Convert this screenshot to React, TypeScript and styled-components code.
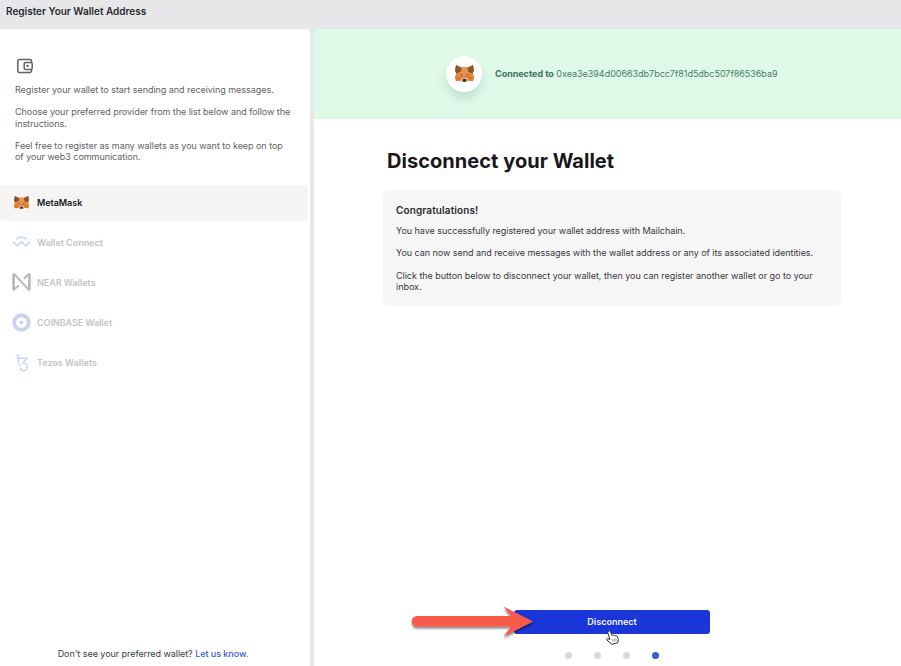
import React from 'react';
import styled, { createGlobalStyle } from 'styled-components';

const GlobalStyle = createGlobalStyle`
  * { box-sizing: border-box; }
  body { margin: 0; background: #e7e7e9; overflow: hidden; font-family: Inter, sans-serif; }
  h1, h2, p { margin: 0; }
  svg { display: block; flex: none; }
`;

const Page = styled.div`
  height: 100vh;
  display: flex;
  flex-direction: column;
  position: relative;
  overflow: hidden;
`;

const TopBar = styled.header`
  height: 29px;
  flex: none;
  padding: 5px 6px 0;
  font-size: 10px;
  line-height: 13px;
  font-weight: 600;
  color: #2a2a2d;
`;

const Body = styled.div`
  flex: 1;
  display: flex;
  gap: 4px;
  min-height: 0;
`;

const Sidebar = styled.aside`
  width: 310px;
  flex: none;
  background: #fff;
  border-radius: 0 4px 0 0;
  display: flex;
  flex-direction: column;
  padding: 28px 2px 0 0;
`;

const Intro = styled.div`
  padding: 0 0 0 15px;
  height: 127.5px;
  display: flex;
  flex-direction: column;
  gap: 11.2px;
  color: #626265;
  font-size: 9px;
  line-height: 11.1px;
  white-space: nowrap;

  svg { margin: 0 0 -2px 1px; }
`;

const Line = styled.span<{ $ls?: number }>`
  display: block;
  letter-spacing: ${(p) => p.$ls ?? -0.042}px;
`;

const WalletList = styled.nav`
  display: flex;
  flex-direction: column;
  gap: 4.2px;
`;

const WalletItem = styled.div<{ $active?: boolean }>`
  height: 36px;
  padding: 0 0 1px 12px;
  display: flex;
  align-items: center;
  gap: 6px;
  border-radius: 4px;
  background: ${(p) => (p.$active ? '#f5f5f5' : 'transparent')};
  color: ${(p) => (p.$active ? '#161618' : '#c4c4c5')};
  font-size: 9px;
  font-weight: 600;
`;

const IconSlot = styled.span`
  width: 19px;
  display: flex;
  justify-content: center;
`;

const Footer = styled.p`
  margin-top: auto;
  padding: 0 2px 6px 0;
  text-align: center;
  font-size: 9px;
  line-height: 13px;
  letter-spacing: -0.05px;
  color: #3b3b3e;
`;

const FooterLink = styled.a`
  color: #4258dc;
  font-weight: 500;
`;

const Main = styled.main`
  flex: 1;
  min-width: 0;
  background: #fff;
  border-radius: 4px 0 0 0;
  overflow: hidden;
  display: flex;
  flex-direction: column;
`;

const Banner = styled.div`
  height: 90px;
  flex: none;
  background: #dff9e9;
  display: flex;
  align-items: center;
  padding: 0 0 1px 132px;
  gap: 13px;
  color: #4a7b66;
  font-size: 9px;
  white-space: nowrap;

  b { font-weight: 700; color: #3e705b; }
`;

const Avatar = styled.div`
  width: 36px;
  height: 36px;
  border-radius: 50%;
  background: #fff;
  display: flex;
  align-items: center;
  justify-content: center;
  box-shadow: 0 7px 9px rgba(60, 120, 90, 0.17);
`;

const Title = styled.h1`
  margin: 28px 0 0 73px;
  font-size: 20px;
  line-height: 28px;
  font-weight: 700;
  letter-spacing: 0.04px;
  color: #18181b;
  white-space: nowrap;
`;

const Card = styled.section`
  margin: 15px 0 0 69px;
  width: 458px;
  height: 116px;
  background: #f6f6f6;
  border-radius: 4px;
  padding: 14px 13px 0;
  display: flex;
  flex-direction: column;
  gap: 11.2px;
  font-size: 9px;
  line-height: 11.1px;
  color: #38383b;
  white-space: nowrap;
`;

const CardTitle = styled.h2`
  font-size: 10px;
  line-height: 13px;
  font-weight: 600;
  letter-spacing: 0.12px;
  color: #2b2b2e;
  margin-bottom: -3.2px;
`;

const Actions = styled.div`
  margin: auto 191px 0 200px;
  display: flex;
  flex-direction: column;
  align-items: center;
`;

const Button = styled.button`
  width: 100%;
  height: 24px;
  border: 0;
  border-radius: 3px;
  padding: 0;
  background: #1a36d8;
  color: #f4f5ff;
  font: 600 9px/24px Inter, sans-serif;
`;

const Steps = styled.div`
  display: flex;
  gap: 22px;
  padding: 18px 0 7px;
`;

const Dot = styled.i<{ $on?: boolean }>`
  width: 7px;
  height: 7px;
  border-radius: 50%;
  background: ${(p) => (p.$on ? '#4057d8' : '#d9d9dc')};
`;

const Pointer = styled.svg`
  position: absolute;
  left: 605px;
  top: 630px;
`;

const Arrow = styled.svg`
  position: absolute;
  left: 405px;
  top: 600px;
`;

const Fox = ({ w, h }: { w: number; h: number }) => (
  <svg width={w} height={h} viewBox="0 0 36 34" preserveAspectRatio="none">
    <path d="M2 0 13 4.500H23L34 0 36 11 34 17 36 24 34 32 25 31 21 34H15L11 31 2 32 0 24 2 17 0 11Z" fill="#e08a43" />
    <path d="M2 0 12 6 13 12 3 17 0 11ZM34 0 24 6 23 12 33 17 36 11Z" fill="#8a5530" />
    <path d="M13 4.500H23L25 15 18 22 11 15Z" fill="#e6944e" />
    <path d="M0 24 11 23 11 31 2 32ZM36 24 25 23 25 31 34 32Z" fill="#e2792d" />
    <path d="M9 20 14 19 14 21.500ZM27 20 22 19 22 21.500Z" fill="#8d5a38" />
    <path d="M12 27 15 26H21L24 27 24 31 21 34H15L12 31Z" fill="#d8b79c" />
    <path d="M15.500 28H20.500L21.500 31.500 20 33.500H16L14.500 31.500Z" fill="#33251f" />
  </svg>
);

const WalletOutline = () => (
  <svg width="18" height="18" viewBox="0 0 18 18" fill="none" stroke="#626264" strokeWidth="1.5">
    <path d="M15.500 5.300V3.900A1.500 1.500 0 0 0 14 2.400H3.300A1.500 1.500 0 0 0 1.800 3.900V14A1.500 1.500 0 0 0 3.300 15.500H14A1.500 1.500 0 0 0 15.500 14V12.400" />
    <rect x="8.200" y="5.500" width="8" height="6.900" rx="1.300" />
    <circle cx="11.600" cy="8.900" r="1.200" fill="#626264" stroke="none" />
  </svg>
);

const WalletConnectIcon = () => (
  <svg width="19" height="12" viewBox="0 0 19 12" fill="none" stroke="#cfdff8" strokeWidth="2" strokeLinejoin="round">
    <path d="M4.200 3.400C7.200.500 11.800.500 14.800 3.400" />
    <path d="M1 5.800 5.300 9.900 9.500 5.800 13.700 9.900 18 5.800" />
  </svg>
);

const NearIcon = () => (
  <svg width="19" height="20" viewBox="0 0 19 20" fill="none" stroke="#b8b8b8" strokeLinejoin="round" strokeLinecap="round">
    <path d="M6.200 14 1.900 17.600Q1.400 18 1.400 17V2.800Q1.400 1.400 2.600 2.400L16.300 17.400Q17.600 18.500 17.600 17V3Q17.600 1.400 16.400 2.400L12.400 6.300" strokeWidth="2" />
    <path d="M1.800 3.500V16.500M17.200 3.500V16.500" strokeWidth="2.200" />
  </svg>
);

const CoinbaseIcon = () => (
  <svg width="19" height="19" viewBox="0 0 19 19">
    <circle cx="9.500" cy="9.500" r="7.300" fill="#fff" stroke="#c9d1f4" strokeWidth="3.700" />
    <circle cx="9.500" cy="9.500" r="1.800" fill="#c3cdf4" />
  </svg>
);

const TezosIcon = () => (
  <svg width="14" height="18" viewBox="0 0 14 18" fill="none" stroke="#cbd5fa" strokeWidth="1.500" strokeLinecap="round" strokeLinejoin="round">
    <path d="M2 1.300H3.500V9.300Q3.500 11.700 6 11.400M1.200 4.300H12L7.700 9C10.400 8.900 12.200 10.400 12.200 12.800 12.200 15.600 9.800 16.900 7.800 16.700 6.300 16.600 5.400 15.700 5.600 14.700" />
    <circle cx="6" cy="14.600" r=".8" fill="#cbd5fa" stroke="none" />
  </svg>
);

const wallets = [
  { name: 'MetaMask', ls: -0.04, icon: <Fox w={15} h={13} />, active: true },
  { name: 'Wallet Connect', ls: -0.03, icon: <WalletConnectIcon /> },
  { name: 'NEAR Wallets', ls: -0.03, icon: <NearIcon /> },
  { name: 'COINBASE Wallet', ls: -0.06, icon: <CoinbaseIcon /> },
  { name: 'Tezos Wallets', ls: 0, icon: <TezosIcon /> },
];

export default function App() {
  return (
    <Page>
      <GlobalStyle />
      <TopBar>Register Your Wallet Address</TopBar>
      <Body>
        <Sidebar>
          <Intro>
            <WalletOutline />
            <p><Line>Register your wallet to start sending and receiving messages.</Line></p>
            <p>
              <Line>Choose your preferred provider from the list below and follow the</Line>
              <Line>instructions.</Line>
            </p>
            <p>
              <Line>Feel free to register as many wallets as you want to keep on top</Line>
              <Line>of your web3 communication.</Line>
            </p>
          </Intro>
          <WalletList>
            {wallets.map((w) => (
              <WalletItem key={w.name} $active={w.active}>
                <IconSlot>{w.icon}</IconSlot>
                <Line $ls={w.ls}>{w.name}</Line>
              </WalletItem>
            ))}
          </WalletList>
          <Footer>
            Don't see your preferred wallet? <FooterLink>Let us know.</FooterLink>
          </Footer>
        </Sidebar>
        <Main>
          <Banner>
            <Avatar><Fox w={19} h={17} /></Avatar>
            <Line $ls={-0.025}><b>Connected to</b> 0xea3e394d00663db7bcc7f81d5dbc507f86536ba9</Line>
          </Banner>
          <Title>Disconnect your Wallet</Title>
          <Card>
            <CardTitle>Congratulations!</CardTitle>
            <p><Line>You have successfully registered your wallet address with Mailchain.</Line></p>
            <p><Line>You can now send and receive messages with the wallet address or any of its associated identities.</Line></p>
            <p>
              <Line $ls={-0.025}>Click the button below to disconnect your wallet, then you can register another wallet or go to your</Line>
              <Line>inbox.</Line>
            </p>
          </Card>
          <Actions>
            <Button>Disconnect</Button>
            <Steps><Dot /><Dot /><Dot /><Dot $on /></Steps>
          </Actions>
        </Main>
      </Body>
      <Arrow width="135" height="44" viewBox="0 0 135 44">
        <defs>
          <filter id="arrowShadow" x="-10%" y="-20%" width="120%" height="150%">
            <feDropShadow dx="0" dy="2" stdDeviation="1.2" floodColor="#000" floodOpacity="0.5" />
          </filter>
        </defs>
        <path d="M12 16H106L98.500 6.500 128 21.500 98.500 36.500 106 26.500H12A5.250 5.250 0 0 1 12 16Z" fill="#fa5a4a" filter="url(#arrowShadow)" />
      </Arrow>
      <Pointer width="15" height="16" viewBox="0 0 15 16">
        <path d="M3.700 1.200C4.600.700 5.400 1.300 5.700 2.200L6.900 5.400C7.400 4.800 8.300 5 8.600 5.600 9.200 5 10.200 5.200 10.500 6 11.300 5.600 12.200 6 12.500 7L13.400 9.700 12.900 12.600 7 14.400 1.900 10C1.200 9.200 2.200 8.200 3.200 8.700L4.900 9.700 3 3.200C2.700 2.300 2.900 1.500 3.700 1.200Z" fill="#fff" stroke="#333" strokeWidth="1" strokeLinejoin="round" />
        <path d="M7.300 9.300 7.900 11.800M9 8.900 9.600 11.400M10.700 8.500 11.300 11" stroke="#555" strokeWidth=".6" />
      </Pointer>
    </Page>
  );
}
